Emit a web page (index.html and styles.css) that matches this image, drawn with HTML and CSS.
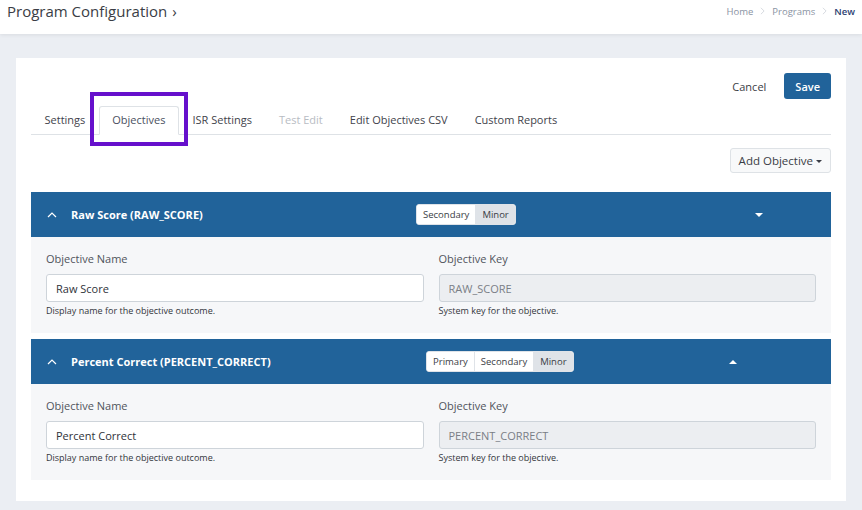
FILE: index.html
```
<!DOCTYPE html>
<html lang="en">
<head>
<title>Program Configuration</title>
<meta charset="UTF-8">
<meta name="viewport" content="width=device-width, initial-scale=1">
<link rel="stylesheet" href="styles.css">
</head>
<body>
<header class="topbar">
 <h1 class="page-title">Program Configuration <span class="title-arrow">&rsaquo;</span></h1>
 <nav class="crumbs">
  <a href="#">Home</a>
  <svg class="crumb-sep" viewBox="0 0 6 10"><polyline points="1,1 5,5 1,9"/></svg>
  <a href="#">Programs</a>
  <svg class="crumb-sep" viewBox="0 0 6 10"><polyline points="1,1 5,5 1,9"/></svg>
  <span class="crumb-current">New</span>
 </nav>
</header>

<main class="page">
 <section class="card">
  <div class="card-actions">
   <button class="btn btn-link">Cancel</button>
   <button class="btn btn-primary">Save</button>
  </div>

  <ul class="tabs">
   <li class="tab">Settings</li>
   <li class="tab active">Objectives<span class="focus-ring"></span></li>
   <li class="tab">ISR Settings</li>
   <li class="tab disabled">Test Edit</li>
   <li class="tab">Edit Objectives CSV</li>
   <li class="tab">Custom Reports</li>
  </ul>

  <div class="toolbar">
   <button class="btn btn-light dropdown-toggle">Add Objective</button>
  </div>

  <div class="objective">
   <div class="obj-head">
    <div class="obj-title">
     <svg class="chevron" viewBox="0 0 10 6"><polyline points="1,5 5,1 9,5"/></svg>
     Raw Score (RAW_SCORE)
    </div>
    <div class="btn-group">
     <button>Secondary</button><button class="on">Minor</button>
    </div>
    <div class="obj-toggle"><span class="caret shifted"></span></div>
   </div>
   <div class="obj-body">
    <div class="field">
     <label>Objective Name</label>
     <input type="text" value="Raw Score">
     <small>Display name for the objective outcome.</small>
    </div>
    <div class="field">
     <label>Objective Key</label>
     <input type="text" value="RAW_SCORE" disabled>
     <small>System key for the objective.</small>
    </div>
   </div>
  </div>

  <div class="objective">
   <div class="obj-head">
    <div class="obj-title">
     <svg class="chevron" viewBox="0 0 10 6"><polyline points="1,5 5,1 9,5"/></svg>
     Percent Correct (PERCENT_CORRECT)
    </div>
    <div class="btn-group">
     <button>Primary</button><button>Secondary</button><button class="on">Minor</button>
    </div>
    <div class="obj-toggle"><span class="caret up"></span></div>
   </div>
   <div class="obj-body">
    <div class="field">
     <label>Objective Name</label>
     <input type="text" value="Percent Correct">
     <small>Display name for the objective outcome.</small>
    </div>
    <div class="field">
     <label>Objective Key</label>
     <input type="text" value="PERCENT_CORRECT" disabled>
     <small>System key for the objective.</small>
    </div>
   </div>
  </div>
 </section>
</main>
</body>
</html>
```

FILE: styles.css
```
html { background: #ebeef3; color: #3b3f46; }
body { margin: 0; font: 11px "Open Sans", sans-serif; }
button, input { font: inherit; }

/* top bar */
.topbar { height: 34px; background: #fff; display: flex; align-items: center;
          justify-content: space-between; padding: 0 7px;
          box-shadow: 0 1px 4px rgba(0,0,0,0.08); position: relative; }
.page-title { margin: 0 0 13px; font-size: 15px; font-weight: normal; color: #3a3d45; }
.title-arrow { font-size: 15px; margin-left: 1px; }
.crumbs { display: flex; align-items: center; gap: 7px; font-size: 9.5px;
          margin-bottom: 12px; }
.crumbs a { color: #8a93a3; text-decoration: none; }
.crumb-sep { width: 5px; height: 8px; fill: none; stroke: #cdd1d8; stroke-width: 1; }
.crumb-current { color: #2e4272; font-weight: 600; }

/* card */
.page { padding: 24px 16px 10px; }
.card { background: #fff; padding: 15px 15px 21px; }
.card-actions { display: flex; justify-content: flex-end; align-items: center; gap: 17px; }

.btn { border: 1px solid transparent; border-radius: 3px; cursor: pointer; }
.btn-link { background: none; color: #3a3d45; padding: 4px 0; }
.btn-primary { background: #21639a; color: #fff; font-weight: 600;
               height: 26px; padding: 0 10px; }
.btn-light { background: #f8f9fa; border-color: #dee2e6; color: #3a3d45;
             height: 25px; padding: 0 8px; font-size: 11.5px; }
.dropdown-toggle:after { content: ''; display: inline-block; margin-left: 3px;
  vertical-align: 2px; border-top: 3px solid; border-left: 3px solid transparent;
  border-right: 3px solid transparent; }

/* tabs */
.tabs { list-style: none; margin: 7px 0 0; padding: 0; display: flex;
        border-bottom: 1px solid #dee2e6; }
.tab { padding: 5px 12.5px 7px; line-height: 15px; color: #3f434b;
       border: 1px solid transparent; border-radius: 3px 3px 0 0;
       margin-bottom: -1px; position: relative; }
.tab.active { border-color: #dee2e6 #dee2e6 #fff; color: #4a5060; }
.tab.disabled { color: #b8bcc3; }
.focus-ring { position: absolute; left: -10px; right: -10px; top: -15px; bottom: -12px;
              border: 4px solid #6610cc; }

.toolbar { display: flex; justify-content: flex-end; margin-top: 13px; }

/* objective panels */
.objective { margin-top: 19px; }
.objective + .objective { margin-top: 6px; }
.obj-head { height: 45px; background: #21639a; color: #fff; display: flex;
            align-items: center; justify-content: space-between; padding: 0 15px 0 16px; }
.obj-title { font-weight: 700; display: flex; align-items: center; }
.chevron { width: 10px; height: 6px; margin-right: 14px; fill: none;
           stroke: #fff; stroke-width: 1.2; }
.btn-group { display: flex; background: #fff; border-radius: 3px; overflow: hidden;
             border: 1px solid #dfe3e8; }
.btn-group button { border: 0; background: #fff; color: #3a3d45; font-size: 9.5px;
                    height: 19px; padding: 0 6px; }
.btn-group button + button { border-left: 1px solid #dfe3e8; }
.btn-group button.on { background: #dfe3e8; }
.obj-toggle { width: 87px; display: flex; }
.caret { border-top: 4px solid #fff; border-left: 4px solid transparent;
         border-right: 4px solid transparent; width: 0; height: 0; }
.caret.up { border-top: 0; border-bottom: 4px solid #fff; }
.caret.shifted { margin-left: 26px; }

.obj-body { background: #f6f7f9; padding: 14px 15px 16px; display: grid;
            grid-template-columns: 1fr 1fr; gap: 15px; }
.field label { display: block; line-height: 16px; color: #50545c; margin-bottom: 7px; }
.field input { display: block; box-sizing: border-box; width: 100%; height: 28px;
               border: 1px solid #ced4da; border-radius: 3px; background: #fff;
               padding: 0 9px; color: #2f333a; }
.field input:disabled { background: #eceef1; color: #7a7e86; }
.field small { display: block; font-size: 9px; line-height: 12px; margin-top: 3px;
               color: #33363c; }
```
